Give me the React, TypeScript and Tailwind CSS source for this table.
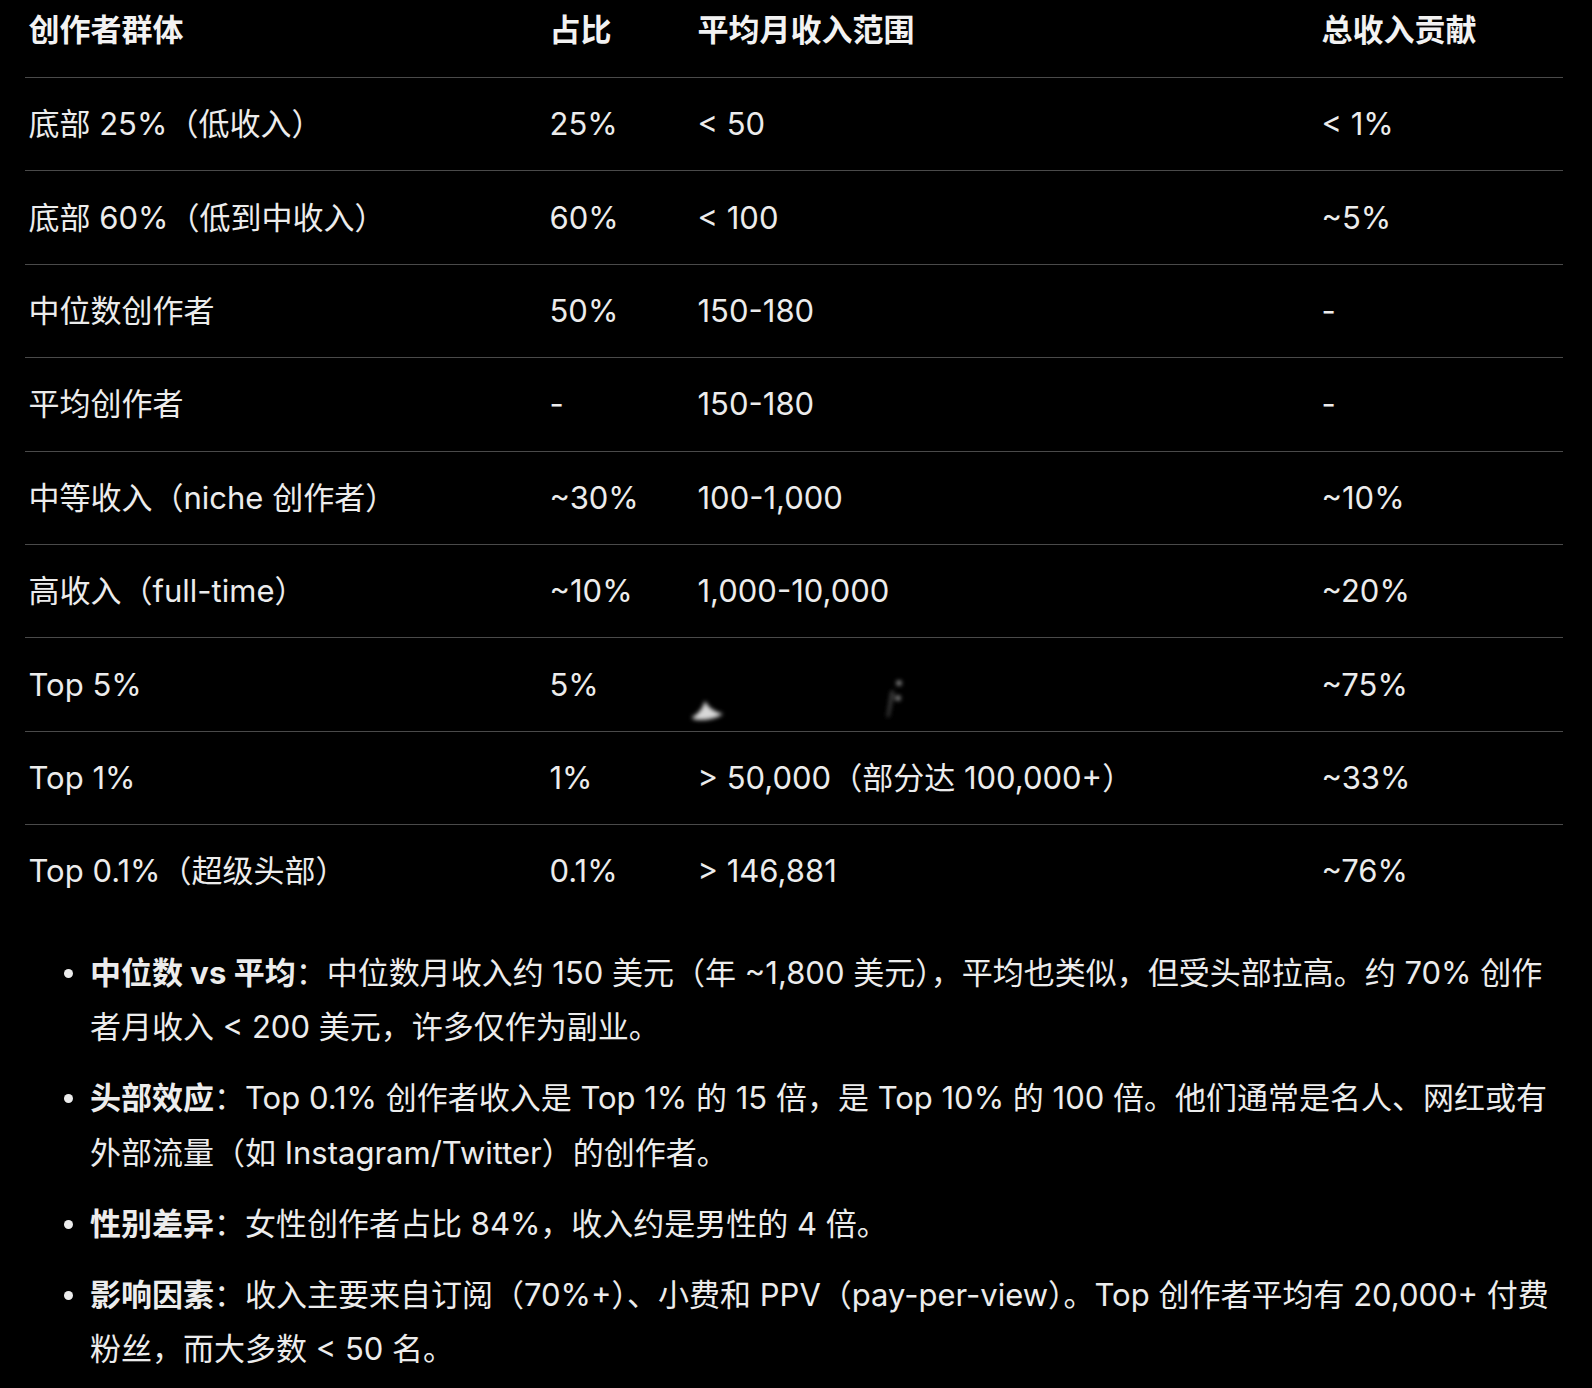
import React from 'react';

type Row = [string, string, string, string];

const rows: Row[] = [
  ['底部 25%（低收入）', '25%', '< 50', '< 1%'],
  ['底部 60%（低到中收入）', '60%', '< 100', '~5%'],
  ['中位数创作者', '50%', '150-180', '-'],
  ['平均创作者', '-', '150-180', '-'],
  ['中等收入（niche 创作者）', '~30%', '100-1,000', '~10%'],
  ['高收入（full-time）', '~10%', '1,000-10,000', '~20%'],
  ['Top 5%', '5%', '', '~75%'],
  ['Top 1%', '1%', '> 50,000（部分达 100,000+）', '~33%'],
  ['Top 0.1%（超级头部）', '0.1%', '> 146,881', '~76%'],
];

const notes: { label: string; text: string }[] = [
  {
    label: '中位数 vs 平均',
    text: '中位数月收入约 150 美元（年 ~1,800 美元），平均也类似，但受头部拉高。约 70% 创作者月收入 < 200 美元，许多仅作为副业。',
  },
  {
    label: '头部效应',
    text: 'Top 0.1% 创作者收入是 Top 1% 的 15 倍，是 Top 10% 的 100 倍。他们通常是名人、网红或有外部流量（如 Instagram/Twitter）的创作者。',
  },
  {
    label: '性别差异',
    text: '女性创作者占比 84%，收入约是男性的 4 倍。',
  },
  {
    label: '影响因素',
    text: '收入主要来自订阅（70%+）、小费和 PPV（pay-per-view）。Top 创作者平均有 20,000+ 付费粉丝，而大多数 < 50 名。',
  },
];

const cols = 'grid grid-cols-[521px_148px_624px_1fr]';

// faint smudge left over in the redacted cell of the Top 5% row
const Smudge: React.FC = () => (
  <svg className="pointer-events-none absolute left-[-6px] top-[-14px]" width="240" height="80" viewBox="0 0 240 80">
    <defs>
      <filter id="blur1" x="-50%" y="-50%" width="200%" height="200%">
        <feGaussianBlur stdDeviation="2.2" />
      </filter>
    </defs>
    <path d="M4 66 Q13 62 17 50 Q22 60 35 63 Q26 69 12 69 Q4 69 4 66 Z" fill="#d8d8d8" filter="url(#blur1)" />
    <g filter="url(#blur1)" fill="#a0a0a0">
      <circle cx="211" cy="32" r="2.6" />
      <circle cx="210" cy="47" r="2.6" />
      <path d="M203 40 L199 66 L201 66 L206 40 Z" fill="#555" />
    </g>
  </svg>
);

const App: React.FC = () => {
  return (
    <div
      className="min-h-screen w-full bg-black text-[#ececec]"
      style={{ fontFamily: 'Inter, "Noto Sans CJK SC", sans-serif' }}
    >
      <div className="pl-[25px] pr-[29px] pb-[30px]">
        <div className={`${cols} h-[77px] items-start pt-[10px] text-[31px] leading-[40px] font-bold text-[#f2f2f2]`}>
          <div className="pl-[3.5px]">创作者群体</div>
          <div className="pl-[3.5px]">占比</div>
          <div className="pl-[3.5px]">平均月收入范围</div>
          <div className="pl-[3.5px]">总收入贡献</div>
        </div>

        {rows.map((r, i) => (
          <div
            key={i}
            className={`${cols} h-[93.4px] items-center border-t-[1.5px] border-[#4a4a4a] text-[31px] leading-[40px]`}
          >
            <div className="pl-[3.5px]">{r[0]}</div>
            <div className="pl-[3.5px]">{r[1]}</div>
            <div className="relative pl-[3.5px] h-[40px]">
              {r[2]}
              {r[0] === 'Top 5%' && <Smudge />}
            </div>
            <div className="pl-[3.5px]">{r[3]}</div>
          </div>
        ))}

        <ul className="mt-[28px] pl-[65px] flex flex-col gap-[16px] text-[31px] leading-[54.8px]">
          {notes.map((n) => (
            <li key={n.label} className="relative">
              <span className="absolute left-[-26px] top-[23px] h-[9px] w-[9px] rounded-full bg-[#ececec]" />
              <span className="font-bold">{n.label}</span>
              <span>：</span>
              {n.text}
            </li>
          ))}
        </ul>
      </div>
    </div>
  );
};

export default App;
